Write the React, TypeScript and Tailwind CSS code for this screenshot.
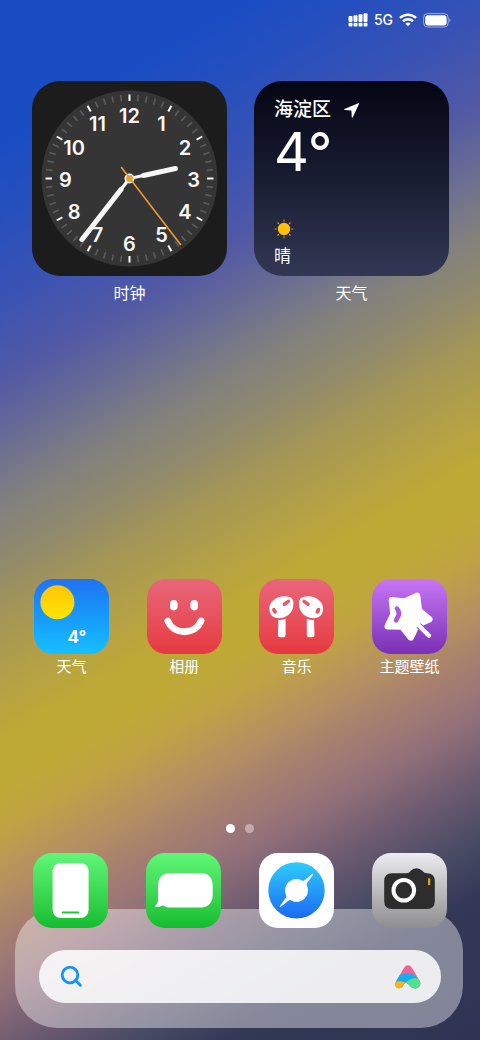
import type { ReactNode } from 'react';

interface AppIconProps {
    name: string;
    label?: string;
    className: string;
    children: ReactNode;
}

const HOURS = [1, 2, 3, 4, 5, 6, 7, 8, 9, 10, 11, 12];
const TICKS = Array.from({ length: 60 }, (_, i) => i);

function StatusBar() {
    return (
        <header className="flex h-10 items-center justify-end gap-[6px] pr-[29px] text-white">
            <svg width="20" height="14" viewBox="0 0 20 14" fill="currentColor" aria-hidden="true">
                <rect x="0.5" y="3" width="4" height="6" rx="1" />
                <rect x="5.5" y="2.2" width="4" height="6.8" rx="1" />
                <rect x="10.5" y="1.3" width="4" height="7.7" rx="1" />
                <rect x="15.5" y="0.3" width="4" height="8.7" rx="1" />
                <rect x="0.5" y="9.8" width="4" height="3.8" rx="1" />
                <rect x="5.5" y="9.8" width="4" height="3.8" rx="1" />
                <rect x="10.5" y="9.8" width="4" height="3.8" rx="1" />
                <rect x="15.5" y="9.8" width="4" height="3.8" rx="1" />
            </svg>
            <span className="text-sm leading-5 font-medium">5G</span>
            <svg width="18" height="14" viewBox="0 0 18 14" fill="none" stroke="currentColor" strokeWidth="2.4" aria-hidden="true">
                <path d="M0.9 4.9 A11.8 11.8 0 0 1 17.1 4.9" />
                <path d="M4 8.2 A7.3 7.3 0 0 1 14 8.2" />
                <path d="M6.3 10.6 Q9 8.4 11.7 10.6 L9 13.3 Z" fill="currentColor" stroke="none" />
            </svg>
            <svg width="28" height="15" viewBox="0 0 28 15" fill="none" aria-hidden="true">
                <rect x="0.6" y="0.6" width="24.6" height="13.4" rx="4" stroke="white" strokeOpacity="0.5" />
                <rect x="2.2" y="2.2" width="21.4" height="10.2" rx="2.6" fill="white" />
                <path d="M26.3 5 Q28.6 7.3 26.3 9.6 Z" fill="white" fillOpacity="0.5" />
            </svg>
        </header>
    );
}

function ClockFace() {
    return (
        <svg viewBox="0 0 195 195" className="h-full w-full" role="img" aria-label="时钟">
            <g transform="translate(97.5 97.5)">
                <circle r="88" fill="#353535" />
                {TICKS.map((tick) => (
                    <line
                        key={tick}
                        y1="-84"
                        y2="-77.5"
                        stroke={tick % 5 === 0 ? '#ffffff' : '#5c5c5c'}
                        strokeWidth={tick % 5 === 0 ? 2 : 1.6}
                        transform={`rotate(${tick * 6})`}
                    />
                ))}
                {HOURS.map((hour) => (
                    <text
                        key={hour}
                        x={Math.sin((hour * Math.PI) / 6) * 64}
                        y={-Math.cos((hour * Math.PI) / 6) * 64 + 8}
                        fill="#f8f8f8"
                        fontSize="20"
                        fontWeight="600"
                        textAnchor="middle"
                    >
                        {hour}
                    </text>
                ))}
                <g stroke="#f7f7f7" strokeLinecap="round">
                    <path d="M0 0 L46 -10" strokeWidth="3.2" />
                    <path d="M14 -3 L46 -10" strokeWidth="5" />
                    <path d="M0 0 L-47.5 61" strokeWidth="3.2" />
                    <path d="M-8.5 11 L-47.5 61" strokeWidth="5.2" />
                </g>
                <circle r="5" fill="#f7f7f7" />
                <path d="M-8 -11 L51 66" stroke="#eb9d33" strokeWidth="1.6" strokeLinecap="round" />
                <circle r="3.4" fill="#eb9d33" />
            </g>
        </svg>
    );
}

function WeatherWidget() {
    return (
        <div className="flex h-full flex-col items-start px-5 pt-[17px] pb-2 text-left text-white">
            <div className="flex items-center gap-3">
                <span className="text-[19px] leading-6 font-medium">海淀区</span>
                <svg width="17" height="17" viewBox="0 0 17 17" fill="white" aria-hidden="true">
                    <path d="M15.8 1 L1.4 7.1 Q0.7 7.9 1.7 8 L8.4 8.6 L8.8 15.2 Q9.2 16.3 9.8 15.3 L16.2 1.6 Q16.4 0.8 15.8 1 Z" />
                </svg>
            </div>
            <span className="text-[54px] leading-[60px]">4°</span>
            <svg width="20" height="20" viewBox="0 0 20 20" className="mt-auto" aria-hidden="true">
                <circle cx="10" cy="10" r="6.2" fill="#ffbf0b" />
                {[0, 45, 90, 135, 180, 225, 270, 315].map((angle) => (
                    <line
                        key={angle}
                        x1="10"
                        x2="10"
                        y1="0.8"
                        y2="2.6"
                        stroke="#e5ab18"
                        strokeWidth="1.1"
                        transform={`rotate(${angle} 10 10)`}
                    />
                ))}
            </svg>
            <span className="mt-[5px] text-[17px] leading-6">晴</span>
        </div>
    );
}

function AppIcon({ name, label, className, children }: AppIconProps) {
    return (
        <button type="button" aria-label={name} className="flex w-[75px] flex-col items-center gap-[3px]">
            <span className={`block size-[75px] overflow-hidden rounded-[19px] bg-linear-to-b ${className}`}>
                <svg viewBox="0 0 75 75" className="h-full w-full" aria-hidden="true">
                    {children}
                </svg>
            </span>
            {label && <span className="text-[15px] leading-5 whitespace-nowrap text-white">{label}</span>}
        </button>
    );
}

function Apps() {
    return (
        <section className="mt-[274px] flex justify-between pr-[33px] pl-[34px]">
            <AppIcon name="天气" label="天气" className="from-[#2072f2] to-[#18bfff]">
                <defs>
                    <linearGradient id="sun" x1="0" y1="0" x2="0" y2="1">
                        <stop offset="0" stopColor="#ffc40a" />
                        <stop offset="1" stopColor="#ffe600" />
                    </linearGradient>
                </defs>
                <circle cx="23.4" cy="23.3" r="17" fill="url(#sun)" />
                <text x="33.5" y="64" fill="white" fontSize="17" fontWeight="700">4°</text>
            </AppIcon>
            <AppIcon name="相册" label="相册" className="from-[#e9657a] to-[#e6383f]">
                <rect x="23" y="21" width="7.6" height="10.4" rx="3.8" fill="white" />
                <rect x="43.4" y="21" width="7.6" height="10.4" rx="3.8" fill="white" />
                <path d="M20.8 42 C27 56.3 48 56.3 54 42" fill="none" stroke="white" strokeWidth="6.8" strokeLinecap="round" />
            </AppIcon>
            <AppIcon name="音乐" label="音乐" className="from-[#e9657a] to-[#e6383f]">
                <g id="bud">
                    <path d="M10.4 31 C9.3 23 17.5 17 26 17.3 C32.5 17.4 35 20.5 34.4 26 C34 33.5 27.5 39.3 19.5 39.2 C14 39 11 36 10.4 31 Z" fill="white" />
                    <path d="M25.4 25.2 L29.3 22.4" stroke="#e85a6b" strokeWidth="3.6" strokeLinecap="round" />
                    <ellipse cx="15.5" cy="31.8" rx="1.9" ry="3.1" fill="#e65363" transform="rotate(-28 15.5 31.8)" />
                    <path d="M19.4 40.8 Q23.5 41.2 26.6 39.8 L26.6 56 Q26.6 58.3 24.3 58.3 H21.2 Q18.9 58.3 18.9 56 Z" fill="white" />
                </g>
                <use href="#bud" transform="translate(74.4 0) scale(-1 1)" />
            </AppIcon>
            <AppIcon name="主题壁纸" label="主题壁纸" className="from-[#c876f5] to-[#7a2fb5]">
                <path
                    d="M20 21.3 L32.5 22.8 L45 17 L46.8 31.5 L57.2 40.3 L44.5 46 L38.8 58.3 L30 47.5 L15.8 47.3 L21.5 35.5 Z"
                    fill="white"
                    stroke="white"
                    strokeWidth="6.6"
                    strokeLinejoin="round"
                />
                <path d="M25 29.6 Q27.8 33 26.6 36.4 L24 41.3" fill="none" stroke="#a957d9" strokeWidth="4.6" strokeLinecap="round" strokeLinejoin="round" />
                <path d="M46.6 46.3 L57.6 57.2" stroke="#a04fd2" strokeWidth="6" />
                <path d="M44 43.7 L57 56.7" stroke="white" strokeWidth="4.2" strokeLinecap="round" />
            </AppIcon>
        </section>
    );
}

function DockApps() {
    return (
        <nav aria-label="Dock" className="relative z-10 flex justify-between px-[33px]">
            <AppIcon name="电话" className="from-[#5ff777] to-[#10bd2e]">
                <rect x="19.6" y="10" width="36" height="55" rx="8" fill="white" />
                <path d="M29.8 59.4 H45.4" stroke="#1fc63c" strokeWidth="2" strokeLinecap="round" />
            </AppIcon>
            <AppIcon name="信息" className="from-[#5ff777] to-[#10bd2e]">
                <path
                    d="M25 20 H53.5 Q66.7 20 66.7 33 V41.5 Q66.7 54.6 53.5 54.6 H25 Q19.5 54.6 17 52.2 Q13 54.5 9.6 54 Q8.6 53.3 9.6 52.5 Q12 50.5 12 47 V33 Q12 20 25 20 Z"
                    fill="white"
                />
            </AppIcon>
            <AppIcon name="浏览器" className="from-white to-white">
                <defs>
                    <linearGradient id="globe" x1="0" y1="0" x2="0" y2="1">
                        <stop offset="0" stopColor="#2dcdfc" />
                        <stop offset="1" stopColor="#1c69f4" />
                    </linearGradient>
                </defs>
                <circle cx="37.5" cy="37.4" r="28.2" fill="url(#globe)" />
                <circle cx="37.5" cy="37.4" r="11.4" fill="white" />
                <path
                    d="M45 27.6 L53.4 20.8 Q54.6 20.4 54.1 21.7 L47.6 30.8 Q47 32.8 48 35 L40 27.6 Q43 28.6 45 27.6 Z M30 47.2 L21.6 54 Q20.4 54.4 20.9 53.1 L27.4 44 Q28 42 27 39.8 L35 47.2 Q32 46.2 30 47.2 Z"
                    fill="white"
                />
            </AppIcon>
            <AppIcon name="相机" className="from-[#ededf1] to-[#8e8d90]">
                <path
                    d="M20 20.2 H34 Q37.2 20.2 38.8 17.7 Q40.5 15.2 44.5 15.2 Q48 15.2 50.2 17.7 Q52.5 20.2 55 20.2 Q62.8 20.5 62.8 28 V48 Q62.8 56 55 56 H20 Q12.2 56 12.2 48 V28 Q12.2 20.2 20 20.2 Z"
                    fill="#2d2d2e"
                />
                <circle cx="31.8" cy="37.3" r="10.3" fill="none" stroke="white" strokeWidth="4" />
                <rect x="56" y="25.3" width="2.2" height="6.8" fill="#e0a21a" />
            </AppIcon>
        </nav>
    );
}

function SearchPanel() {
    return (
        <div className="-mt-[19px] mr-[17px] ml-[15px] rounded-[42px] bg-white/40 pt-[41px] pr-[22px] pb-[25px] pl-6">
            <form className="flex h-[53px] items-center rounded-full bg-white/85 pr-5 pl-[21px]">
                <label htmlFor="search" aria-label="搜索">
                    <svg width="23" height="23" viewBox="0 0 23 23" fill="none" stroke="#0c96f7" strokeWidth="2.8" strokeLinecap="round">
                        <circle cx="10" cy="10" r="7.8" />
                        <path d="M15.6 15.6 L20.4 20.2" />
                    </svg>
                </label>
                <input id="search" type="search" className="h-full min-w-0 flex-1 bg-transparent px-3 text-base text-gray-800 outline-none" />
                <button type="button" aria-label="小爱">
                    <svg width="26" height="24" viewBox="0 0 26 24">
                        <defs>
                            <clipPath id="mark">
                                <path d="M9.2 2.4 Q13 -1.8 16.8 2.4 L25 16.5 Q26.3 20 23.8 22.1 Q20.5 24.6 16.5 22.3 Q12 17.3 10.2 17.6 L7.2 21.8 Q4.2 24.6 1.4 22.3 Q-0.6 20 1.2 16.3 Z" />
                            </clipPath>
                        </defs>
                        <g clipPath="url(#mark)">
                            <path d="M0 0 H26 V24 H0 Z" fill="#f1619a" />
                            <path d="M0 14 Q3 9 12 8.6 Q19 8.3 23 13.6 V24 H0 Z" fill="#12aef5" />
                            <path d="M0 17.6 Q4 15 9.8 17.2 L8 24 H0 Z" fill="#ffb60a" />
                            <path d="M10 17.8 Q17 11.8 23 13.4 L26 16 V24 H14 Z" fill="#52e08d" />
                        </g>
                    </svg>
                </button>
            </form>
        </div>
    );
}

export default function App() {
    return (
        <main className="flex min-h-screen flex-col bg-[linear-gradient(150deg,#1a4dc3_0%,#1a4dc3_11%,#254fbe_16%,#3b53b3_23%,#5359a4_29%,#6b6e92_34%,#7f7f80_38%,#918a6c_43%,#a39657_47%,#b7a343_53%,#bea836_56%,#bfa837_60%,#c0a344_63%,#b69260_67%,#a67f70_71%,#94717a_75%,#6c5a70_80%,#464a63_85%,#343857_89%,#2f3454_100%)] font-[Inter,'Noto_Sans_CJK_SC',sans-serif]">
            <StatusBar />
            <section className="mt-[41px] grid grid-cols-2 gap-[27px] pr-[31px] pl-8">
                <figure className="flex flex-col items-center gap-[5px]">
                    <div className="aspect-square w-full overflow-hidden rounded-[28px] bg-[#1c1c1c]">
                        <ClockFace />
                    </div>
                    <figcaption className="text-base leading-6 text-white">时钟</figcaption>
                </figure>
                <figure className="flex flex-col items-center gap-[5px]">
                    <div className="aspect-square w-full overflow-hidden rounded-[28px] bg-linear-to-b from-[#050613] to-[#323854]">
                        <WeatherWidget />
                    </div>
                    <figcaption className="text-base leading-6 text-white">天气</figcaption>
                </figure>
            </section>
            <Apps />
            <footer className="mt-auto pb-3">
                <div className="mb-5 flex justify-center gap-[10px]">
                    <span className="size-[9px] rounded-full bg-white" />
                    <span className="size-[9px] rounded-full bg-white/40" />
                </div>
                <DockApps />
                <SearchPanel />
            </footer>
        </main>
    );
}
